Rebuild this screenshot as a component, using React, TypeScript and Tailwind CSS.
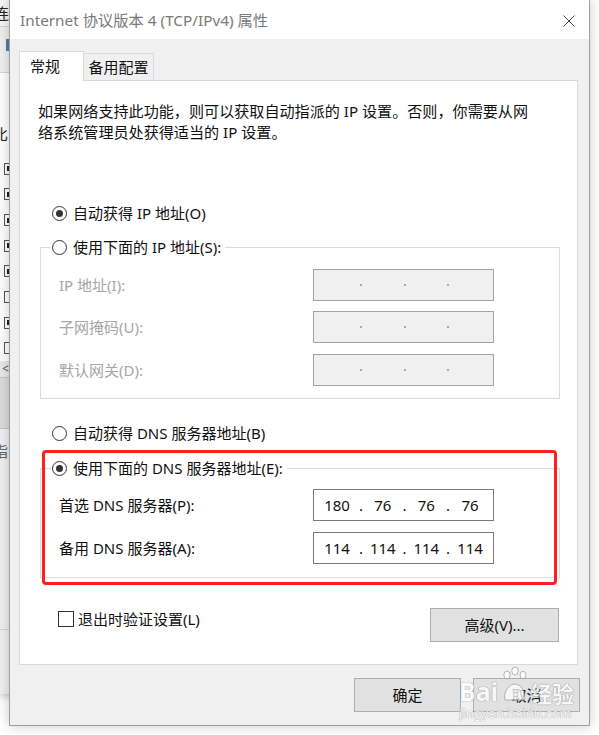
import React from "react";

const FONT = "font-['Noto_Sans','Noto_Sans_CJK_SC',sans-serif]";

function Radio({ checked }: { checked?: boolean }) {
  return (
    <span className="flex h-[15px] w-[15px] shrink-0 items-center justify-center rounded-full border border-[#333333] bg-white">
      {checked && <span className="h-[7px] w-[7px] rounded-full bg-[#333333]" />}
    </span>
  );
}

const fieldWidths = ["w-[44px]", "w-[39.5px]", "w-[39.5px]", "w-[40px]"];

function IpBox({ values }: { values?: string[] }) {
  const enabled = !!values;
  return (
    <div
      className={
        enabled
          ? "flex h-[32px] w-[181px] items-center border border-[#7a7a7a] bg-white pl-[1px] text-[15px] text-[#111111]"
          : "flex h-[32px] w-[181px] items-center border border-[#a3a3a3] bg-[#f0f0f0] pl-[1px]"
      }
    >
      {fieldWidths.map((w, i) => (
        <React.Fragment key={i}>
          {i > 0 && (
            <span className="flex w-[4px] justify-center">
              {enabled ? (
                <span className="leading-none">.</span>
              ) : (
                <span className="h-[2px] w-[2px] shrink-0 rounded-full bg-[#8792a8]" />
              )}
            </span>
          )}
          <span className={`${w} text-center leading-none`}>{enabled ? values![i] : ""}</span>
        </React.Fragment>
      ))}
    </div>
  );
}

function FieldRow({ label, values, disabled, mt }: { label: string; values?: string[]; disabled?: boolean; mt: string }) {
  return (
    <div className={`flex h-[32px] items-center ${mt}`}>
      <span className={disabled ? "w-[272px] pl-[18px] text-[#a6a6a6]" : "w-[272px] pl-[18px] text-[#111111]"}>{label}</span>
      <IpBox values={values} />
    </div>
  );
}

function BackWindow() {
  const checks = [true, true, true, true, true, false, true, false];
  return (
    <div className="absolute left-0 top-0 flex h-[694px] w-[40px] flex-col bg-[#f0f0f0] text-[15px] text-[#222222] shadow-[0_2px_8px_rgba(0,0,0,0.25)]">
      <div className="flex h-[27px] items-center overflow-hidden border-b border-[#d4d4d4] bg-[#f7f7f7]">
        <span className="-ml-[6px] leading-none">连</span>
      </div>
      <div className="flex h-[46px] flex-col border-b border-[#d4d4d4]">
        <div className="mt-[12px] ml-[6px] h-[12px] w-[4px] bg-[#4d7fae]" />
      </div>
      <div className="flex h-[81px] flex-col bg-white">
        <span className="-ml-[7px] mt-[54px] leading-none">比</span>
      </div>
      <div className="flex h-[207px] flex-col border-r border-[#bcbcbc] bg-white pt-[2px]">
        {checks.map((c, i) => (
          <div key={i} className="flex h-[26px] items-center">
            <span className="ml-[4px] flex h-[12px] w-[12px] items-center border border-[#555555] bg-white">
              {c && <span className="ml-[2px] h-[5px] w-[3px] bg-[#222222]" />}
            </span>
          </div>
        ))}
      </div>
      <div className="flex h-[16px] items-center bg-[#e8e8e8]">
        <span className="ml-[2px] text-[12px] leading-none text-[#555555]">&lt;</span>
      </div>
      <div className="h-[52px] border-b border-t border-[#c8c8c8] bg-[#dcdcdc]" />
      <div className="flex flex-1 flex-col">
        <span className="-ml-[7px] mt-[15px] leading-none text-[#666666]">指</span>
        <div className="mt-[170px] h-px w-full bg-[#d4d4d4]" />
      </div>
    </div>
  );
}

export default function App() {
  return (
    <div className={`relative h-[735px] w-[599px] overflow-hidden bg-white ${FONT}`}>
      <BackWindow />

      <div className="absolute left-[9px] top-[-1px] flex h-[727px] w-[581px] flex-col border border-[#9f9f9f] bg-[#f0f0f0] shadow-[0_0_12px_rgba(0,0,0,0.22)]">
        {/* title bar */}
        <div className="flex h-[39px] items-center justify-between bg-white pl-[10px] pr-[14px] pt-[2px]">
          <span className="text-[15.3px] text-[#7a7a7a]">Internet 协议版本 4 (TCP/IPv4) 属性</span>
          <svg width="12" height="12" viewBox="0 0 12 12">
            <path d="M0.5 0.5 L11.5 11.5 M11.5 0.5 L0.5 11.5" stroke="#4a4a4a" strokeWidth="1" />
          </svg>
        </div>

        {/* tabs */}
        <div className="ml-[9px] mt-[12px] flex h-[29px] items-start text-[15px] text-[#111111]">
          <div className="relative z-10 flex h-[30px] w-[65px] items-center border-l border-r border-t border-[#d9d9d9] bg-white pl-[10px] pb-[1px]">
            常规
          </div>
          <div className="mt-[2px] flex h-[27px] w-[70px] items-center justify-center border-r border-t border-[#d9d9d9] bg-[#f0f0f0] pt-[1px]">
            备用配置
          </div>
        </div>

        {/* panel */}
        <div className="ml-[9px] flex h-[585px] w-[559px] flex-col border border-[#d9d9d9] bg-white text-[15px] text-[#111111]">
          <p className="ml-[18px] mt-[20px] whitespace-nowrap text-[15.1px] leading-[21px]">
            如果网络支持此功能，则可以获取自动指派的 IP 设置。否则，你需要从网
            <br />
            络系统管理员处获得适当的 IP 设置。
          </p>

          <div className="ml-[32px] mt-[59px] flex h-[22px] items-center gap-[6px]">
            <Radio checked />
            <span>自动获得 IP 地址(O)</span>
          </div>

          <div className="ml-[20px] mt-[23px] flex h-[152px] w-[520px] flex-col border border-[#dcdcdc]">
            <div className="-mt-[12px] ml-[10px] flex h-[22px] w-fit items-center gap-[6px] bg-white pl-[1px] pr-[4px]">
              <Radio />
              <span>使用下面的 IP 地址(S):</span>
            </div>
            <FieldRow label="IP 地址(I):" disabled mt="mt-[11px]" />
            <FieldRow label="子网掩码(U):" disabled mt="mt-[10px]" />
            <FieldRow label="默认网关(D):" disabled mt="mt-[11px]" />
          </div>

          <div className="ml-[32px] mt-[23px] flex h-[22px] items-center gap-[6px]">
            <Radio />
            <span>自动获得 DNS 服务器地址(B)</span>
          </div>

          <div className="relative ml-[20px] mt-[24px] flex h-[110px] w-[520px] flex-col border border-[#dcdcdc]">
            <div className="-mt-[12px] ml-[10px] flex h-[22px] w-fit items-center gap-[6px] bg-white pl-[1px] pr-[4px]">
              <Radio checked />
              <span>使用下面的 DNS 服务器地址(E):</span>
            </div>
            <FieldRow label="首选 DNS 服务器(P):" values={["180", "76", "76", "76"]} mt="mt-[10px]" />
            <FieldRow label="备用 DNS 服务器(A):" values={["114", "114", "114", "114"]} mt="mt-[11px]" />
            <div className="pointer-events-none absolute left-[1px] top-[-19px] h-[135px] w-[515px] rounded-[4px] border-[3px] border-[#ff1f1f]" />
          </div>

          <div className="mt-[30px] flex h-[34px] items-start justify-between pl-[38px] pr-[18px]">
            <div className="flex h-[22px] items-center gap-[4px]">
              <span className="h-[16px] w-[16px] border border-[#333333] bg-white" />
              <span>退出时验证设置(L)</span>
            </div>
            <button className="h-[34px] w-[129px] border border-[#adadad] bg-[#e1e1e1] text-[15px] text-[#111111]">
              高级(V)...
            </button>
          </div>
        </div>

        {/* dialog buttons */}
        <div className="mt-[13px] flex justify-end gap-[12px] pr-[9px] text-[15px] text-[#111111]">
          <button className="h-[34px] w-[107px] border border-[#adadad] bg-[#e1e1e1]">确定</button>
          <button className="h-[34px] w-[107px] border border-[#adadad] bg-[#e1e1e1]">取消</button>
        </div>
      </div>

      {/* watermark */}
      <div className="pointer-events-none absolute left-[459px] top-[664px] flex flex-col items-start opacity-75">
        <div className="flex h-[40px] items-end">
          <span className="text-[25px] font-bold leading-none text-white [text-shadow:0_0_1px_#7d7d7d,0_0_1px_#7d7d7d]">Bai</span>
          <svg width="30" height="38" viewBox="0 0 30 38" className="mx-[1px]">
            <g fill="white" stroke="#8a8a8a" strokeWidth="0.8">
              <ellipse cx="8" cy="9" rx="3.2" ry="4" />
              <ellipse cx="16" cy="5" rx="3.2" ry="4" />
              <ellipse cx="24" cy="9" rx="3" ry="3.8" />
              <path d="M6 34 C4 26 10 18 16 18 C22 18 27 26 25 34 Z" />
            </g>
          </svg>
          <span className="text-[22px] font-bold leading-none text-white [text-shadow:0_0_1px_#7d7d7d,0_0_1px_#7d7d7d]">经验</span>
        </div>
        <span className="mt-[3px] text-[13px] leading-none text-white [text-shadow:0_0_1px_#8a8a8a,0_0_1px_#8a8a8a]">jingyan.baidu.com</span>
      </div>
    </div>
  );
}
